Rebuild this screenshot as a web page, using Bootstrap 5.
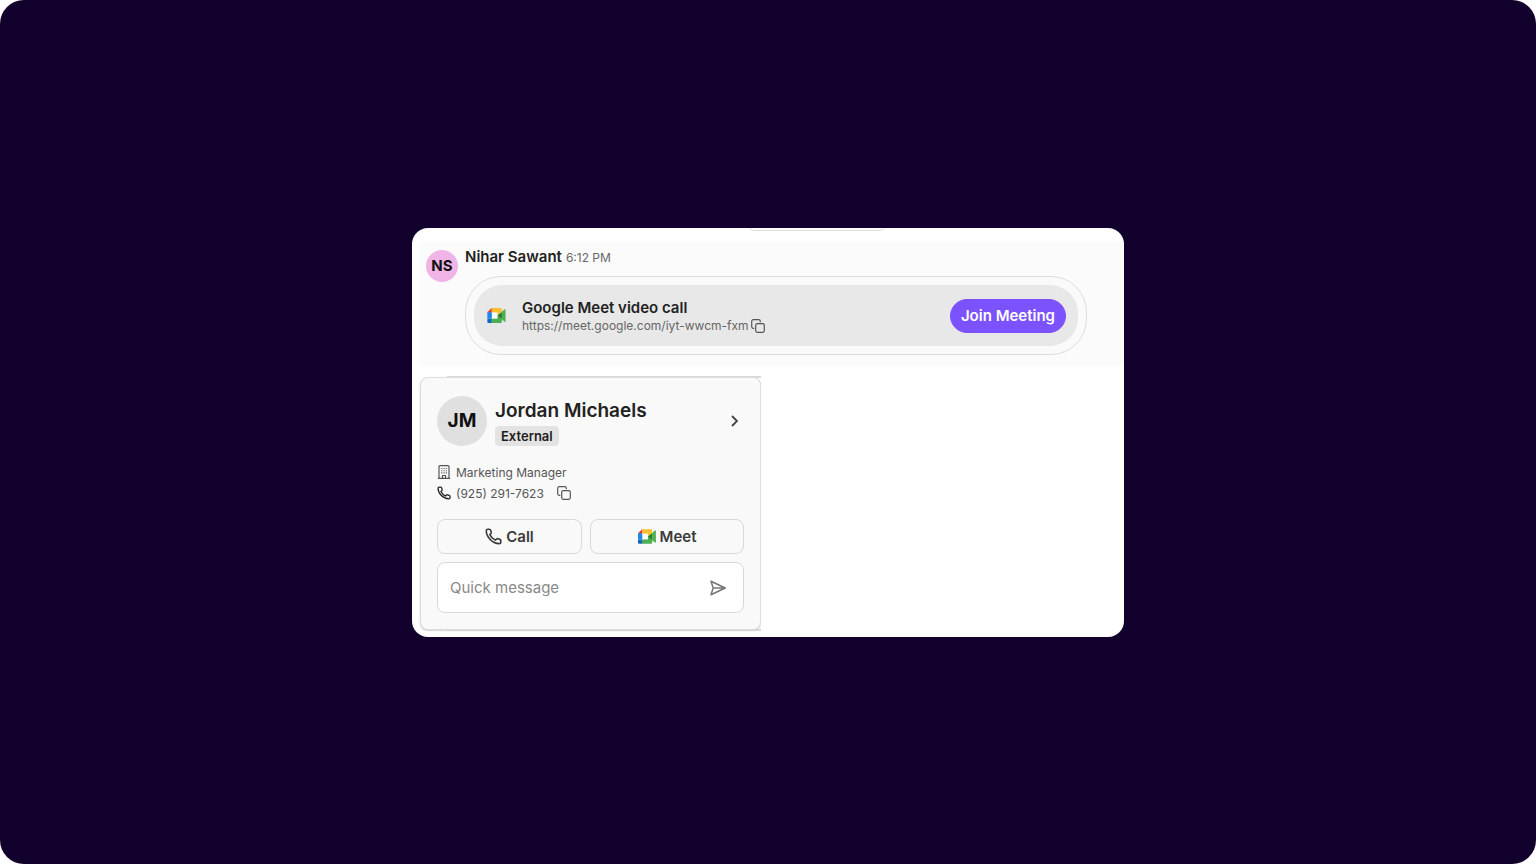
<!DOCTYPE html>
<html lang="en">
<head>
<meta charset="utf-8">
<meta name="viewport" content="width=device-width, initial-scale=1">
<title>Google Meet in chat</title>
<link href="https://cdn.jsdelivr.net/npm/bootstrap@5.3.0/dist/css/bootstrap.min.css" rel="stylesheet">
<style>
body { font-family: Inter, "Liberation Sans", sans-serif; color: #222; background: #fff; font-size: 15px; line-height: 20px; }
.stage { background: #11002b; border-radius: 24px; }
.panel { width: 100%; max-width: 712px; background: #fff; border-radius: 16px; padding: 14px 0 6px 7px; }
.peek { top: -10px; left: 336px; width: 138px; height: 13px; border: 1px solid #ddd; border-radius: 12px; }
.message { background: #fbfbfb; padding: 5px 37px 11px 7px; gap: 7px; }
.avatar { width: 32px; height: 32px; background: #f0b5e6; color: #111; font-weight: 700; font-size: 15px; margin-top: 3px; padding-top: 1px; }
.avatar-lg { width: 50px; height: 50px; background: #e0e0e0; font-size: 19px; margin: 0; }
.author { font-weight: 600; font-size: 15px; }
.time { font-size: 12px; color: #666; }
.bubble { border: 1px solid #ddd; border-radius: 36px; padding: 8px; margin-top: 8px; background: #fafafa; }
.invite { background: #e8e8e8; border-radius: 28px; padding: 1px 12px 0 13px; height: 61px; }
.invite-title { font-weight: 600; font-size: 15px; line-height: 20px; }
.invite-link { font-size: 12px; line-height: 16px; color: #666; }
.invite-url { gap: 2px; }
.plain { border: 0; padding: 0; background: none; color: #555; display: inline-flex; }
.join { --bs-btn-color: #fff; --bs-btn-bg: #7c52ff; --bs-btn-border-color: #7c52ff; --bs-btn-hover-color: #fff; --bs-btn-hover-bg: #6b40ee; font-size: 15px; font-weight: 600; line-height: 20px; padding: 6px 10px; }
.contact-wrap { max-width: 342px; margin-top: 10px; padding: 1px 0 1px 1px; }
.contact-wrap::before, .contact-wrap::after { content: ""; position: absolute; right: 0; left: 28px; height: 2px; background: #d9d9d9; }
.contact-wrap::before { top: 0; }
.contact-wrap::after { bottom: 0; background: #ddd; }
.contact { position: relative; z-index: 1; background: #f9f9f9; border: 1px solid #ddd; border-radius: 8px; padding: 18px 16px 16px; box-shadow: 0 1px 2px #ccc; clip-path: inset(-2px 0 -2px -3px); }
.contact-name { font-size: 19px; line-height: 30px; font-weight: 600; margin: 0; }
.tag { background: #e3e3e3; color: #1d1d1d; font-size: 13px; line-height: 16px; font-weight: 600; padding: 2px 6px; border-radius: 4px; }
.details { margin-top: 16px; }
.detail { font-size: 12px; line-height: 21px; gap: 5px; color: #555; }
.actions { display: grid; grid-template-columns: 145fr 154fr; gap: 8px; margin-top: 15px; }
.action { --bs-btn-color: #3b3b3b; --bs-btn-border-color: #d8d8d8; --bs-btn-hover-bg: #eee; --bs-btn-border-radius: 8px; font-size: 15px; font-weight: 600; line-height: 21px; padding: 6px; }
.quick { border: 1px solid #d8d8d8; border-radius: 8px; background: #fff; padding: 1px 17px 0 12px; height: 51px; margin-top: 8px; }
.quick input { border: 0; outline: 0; background: none; min-width: 0; font-size: 15px; color: #333; padding: 1px 0 0; }
.quick input::placeholder { color: #888; }
svg { display: block; flex: none; }
</style>
</head>
<body>
<svg width="0" height="0" class="position-absolute" aria-hidden="true">
  <defs>
    <symbol id="meet" viewBox="0 0 88 72">
      <path fill="#2e7d32" d="M48 36l9 12 12.500 6 2-18-2-17-12.500 5z"/>
      <path fill="#1565c0" d="M0 51.500V66c0 3.320 2.690 6 6 6h16V51.500z"/>
      <path fill="#e53935" d="M20.500 0L0 20.500 12 24l10-3.500V0z"/>
      <path fill="#1e88e5" d="M22 20.500H0v31h22z"/>
      <path fill="#4caf50" d="M82.600 6.680L69.500 18.420v35.660l13.160 11.790c1.970 1.540 4.850.135 4.850-2.370V9c0-2.530-2.940-3.930-4.910-2.320zM48 36v14H22l-2 2v20h43.500c3.320 0 6-2.690 6-6V53.080z"/>
      <path fill="#fbc02d" d="M63.500 0h-43v22H48v14l21.500-17V6c0-3.320-2.690-6-6-6z"/>
      <path fill="#fff" d="M22 22h26v28H22z"/>
    </symbol>
    <symbol id="copy" viewBox="0 0 14 14">
      <rect x="4.700" y="4.700" width="8.600" height="8.600" rx="1.500" fill="none" stroke="currentColor" stroke-width="1.200"/>
      <path d="M3.300 9.300H2.200A1.500 1.500 0 0 1 .7 7.800V2.200A1.500 1.500 0 0 1 2.200.7h5.600a1.500 1.500 0 0 1 1.500 1.500v1" fill="none" stroke="currentColor" stroke-width="1.200"/>
    </symbol>
    <symbol id="phone" viewBox="0 0 16 16">
      <path d="M1.200 2.700C1.200 1.700 1.700 1.200 2.500 1.200h1.600c.6 0 1 .3 1.200.9l.6 1.800c.2.600 0 1-.4 1.400L4.500 6.200c1.100 2.200 2.900 4 5.200 5.200l1.100-1c.4-.4.8-.5 1.300-.3l1.900.6c.6.200.9.600.9 1.200v1.500c0 .8-.6 1.300-1.500 1.300C7.300 14.700 1.200 8.700 1.200 2.700z" fill="none" stroke="currentColor" stroke-width="1.500" stroke-linejoin="round"/>
    </symbol>
  </defs>
</svg>

<main class="stage min-vh-100 d-flex align-items-center justify-content-center">
  <section class="panel position-relative overflow-hidden">
    <div class="peek position-absolute"></div>

    <article class="message d-flex align-items-start">
      <div class="avatar rounded-circle d-flex align-items-center justify-content-center flex-shrink-0">NS</div>
      <div class="flex-grow-1">
        <div class="d-flex align-items-baseline gap-1"><span class="author">Nihar Sawant</span><span class="time">6:12 PM</span></div>
        <div class="bubble">
          <div class="invite d-flex align-items-center">
            <svg width="19" height="15" aria-hidden="true"><use href="#meet"/></svg>
            <div class="ms-3 flex-grow-1">
              <div class="invite-title">Google Meet video call</div>
              <div class="invite-url d-flex align-items-center">
                <a class="invite-link text-decoration-none" href="https://meet.google.com/iyt-wwcm-fxm">https://meet.google.com/iyt-wwcm-fxm</a>
                <button type="button" class="plain" aria-label="Copy meeting link"><svg width="14" height="14"><use href="#copy"/></svg></button>
              </div>
            </div>
            <button type="button" class="btn join rounded-pill">Join Meeting</button>
          </div>
        </div>
      </div>
    </article>

    <div class="contact-wrap position-relative">
      <article class="contact">
        <header class="d-flex align-items-center gap-2">
          <div class="avatar avatar-lg rounded-circle d-flex align-items-center justify-content-center flex-shrink-0">JM</div>
          <div class="flex-grow-1">
            <h2 class="contact-name">Jordan Michaels</h2>
            <div class="d-flex"><span class="tag">External</span></div>
          </div>
          <button type="button" class="plain" aria-label="Open profile"><svg width="18" height="18" viewBox="0 0 18 18" fill="none" stroke="#444" stroke-width="1.800"><path d="M6 4l5 5-5 5"/></svg></button>
        </header>

        <div class="details">
          <div class="detail d-flex align-items-center">
            <svg width="14" height="14" viewBox="0 0 14 14" fill="none" stroke="currentColor" aria-hidden="true"><path d="M2 13V1.700Q2 .7 3 .7h8q1 0 1 1V13M.8 13.300h12.400M5.500 13v-2.500h3V13" stroke-width="1.200"/><path d="M4.300 3.500h5.600M4.300 5.700h5.600M4.300 7.900h5.600" stroke-width="1.100" stroke-dasharray="1.100 1.150"/></svg>
            <span>Marketing Manager</span>
          </div>
          <div class="detail d-flex align-items-center">
            <svg width="14" height="14" color="#222" aria-hidden="true"><use href="#phone"/></svg>
            <span>(925) 291-7623</span>
            <button type="button" class="plain ms-2" aria-label="Copy phone number"><svg width="14" height="14"><use href="#copy"/></svg></button>
          </div>
        </div>

        <div class="actions">
          <button type="button" class="btn action d-flex align-items-center justify-content-center gap-1"><svg width="17" height="17" aria-hidden="true"><use href="#phone"/></svg>Call</button>
          <button type="button" class="btn action d-flex align-items-center justify-content-center gap-1"><svg width="18" height="15" aria-hidden="true"><use href="#meet"/></svg>Meet</button>
        </div>

        <form class="quick d-flex align-items-center">
          <input class="flex-grow-1" type="text" placeholder="Quick message" aria-label="Quick message">
          <button type="submit" class="plain" aria-label="Send"><svg width="16" height="16" viewBox="0 0 16 16" fill="none" stroke="#777" stroke-width="1.500" stroke-linejoin="round"><path d="M1 1.300L15.200 8 1 14.700 3.200 8zM3.200 8h12"/></svg></button>
        </form>
      </article>
    </div>
  </section>
</main>
<script src="https://cdn.jsdelivr.net/npm/bootstrap@5.3.0/dist/js/bootstrap.bundle.min.js"></script>
</body>
</html>
